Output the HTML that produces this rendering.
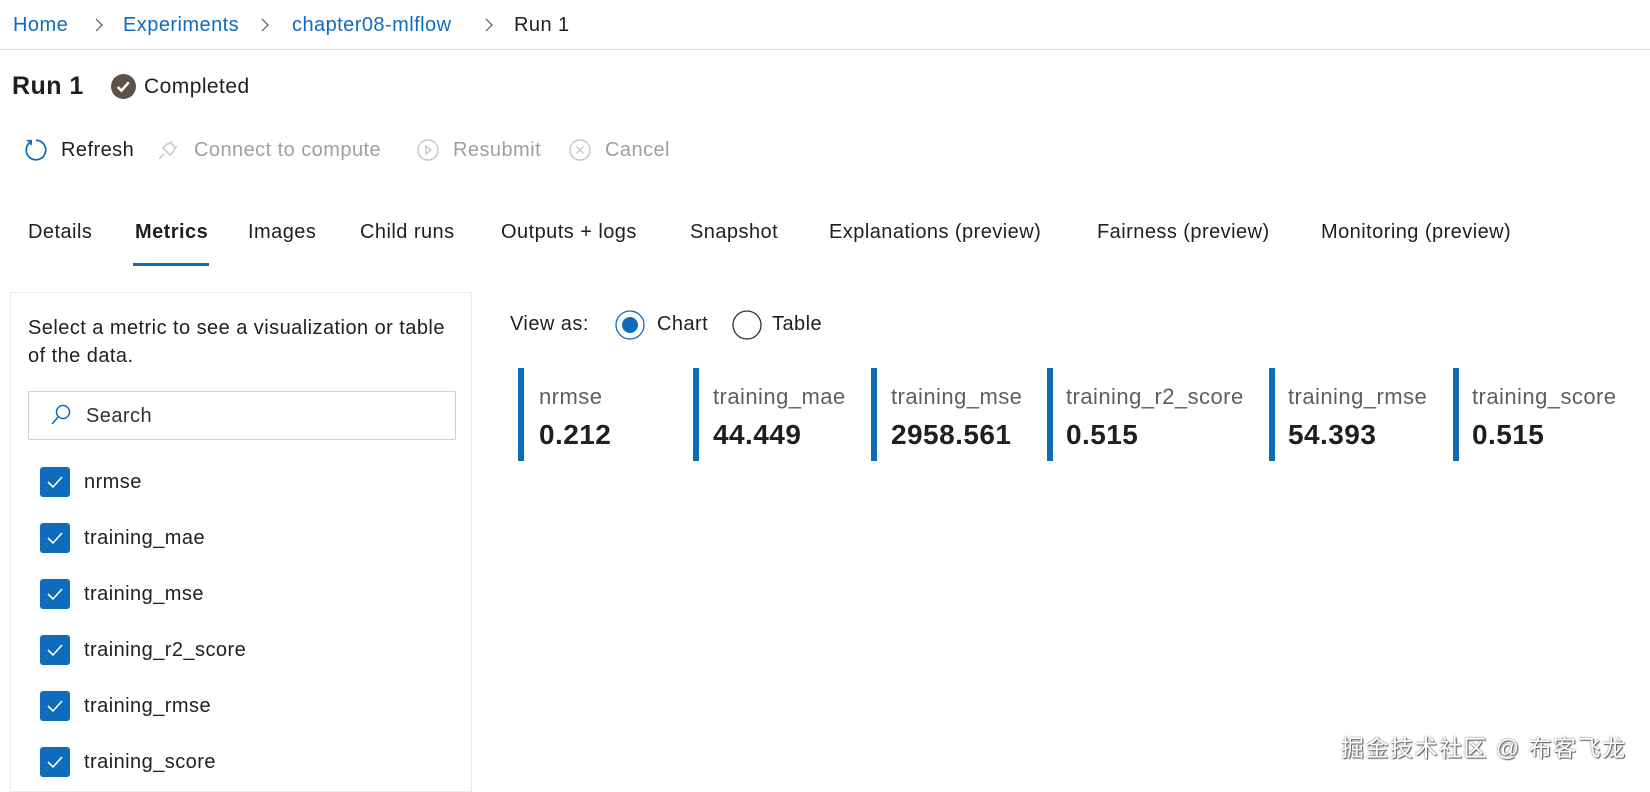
<!DOCTYPE html>
<html><head><meta charset="utf-8"><style>
*{margin:0;padding:0;box-sizing:border-box}
body{width:1650px;height:785px;overflow:hidden;background:#fff;font-family:"Liberation Sans","Noto Sans CJK SC",sans-serif;color:#201f1e;position:relative;letter-spacing:0.45px}
.a{position:absolute;white-space:nowrap;line-height:1}
.bc{font-size:20px;color:#0f6cbd;top:15px}
.chev{position:absolute;top:17px}
.tb{font-size:20px;top:140px;color:#a19f9d}
.tab{font-size:20px;top:222px;color:#201f1e}
.cb{position:absolute;left:40px;width:30px;height:30px;background:#0f6cbd;border-radius:3px}
.cb svg{position:absolute;left:6px;top:7px}
.lbl{font-size:20px;left:84px}
.bar{position:absolute;top:368px;height:93px;width:6px;background:#0f6cbd}
.ml{font-size:22px;color:#605e5c;top:386px}
.mv{font-size:28px;font-weight:bold;color:#201f1e;top:421px}
</style></head><body>
<div class="a bc" style="left:13px">Home</div>
<svg class="chev" style="left:94px" width="10" height="16" viewBox="0 0 10 16"><path d="M2 2l6 6-6 6" stroke="#555" stroke-width="1.2" fill="none"/></svg>
<div class="a bc" style="left:123px">Experiments</div>
<svg class="chev" style="left:260px" width="10" height="16" viewBox="0 0 10 16"><path d="M2 2l6 6-6 6" stroke="#555" stroke-width="1.2" fill="none"/></svg>
<div class="a bc" style="left:292px">chapter08-mlflow</div>
<svg class="chev" style="left:484px" width="10" height="16" viewBox="0 0 10 16"><path d="M2 2l6 6-6 6" stroke="#555" stroke-width="1.2" fill="none"/></svg>
<div class="a bc" style="left:514px;color:#201f1e">Run 1</div>
<div style="position:absolute;left:0;top:49px;width:1650px;height:1px;background:#e1dfdd"></div>

<div class="a" style="left:12px;top:74px;font-size:25px;font-weight:bold">Run 1</div>
<svg style="position:absolute;left:111px;top:74px" width="25" height="25" viewBox="0 0 24 24"><circle cx="12" cy="12" r="12" fill="#5c5248"/><path d="M6.5 12.5l3.5 3.5 7-8" stroke="#fff" stroke-width="2.4" fill="none"/></svg>
<div class="a" style="left:144px;top:76px;font-size:21px">Completed</div>

<svg style="position:absolute;left:23px;top:137px" width="26" height="26" viewBox="0 0 24 24"><path d="M7 4.5A9 9 0 1 0 12 3" stroke="#0f6cbd" stroke-width="1.6" fill="none"/><path d="M3.5 3.5h4v4" stroke="#0f6cbd" stroke-width="1.6" fill="none"/></svg>
<div class="a tb" style="left:61px;color:#201f1e">Refresh</div>
<svg style="position:absolute;left:156px;top:138px" width="24" height="24" viewBox="0 0 24 24"><path d="M3 21l5-5M16 3l-3 3M21 8l-3 3M7 10l7 7 3-3c2-2 2-5 0-7s-5-2-7 0z" stroke="#c8c6c4" stroke-width="1.4" fill="none"/></svg>
<div class="a tb" style="left:194px">Connect to compute</div>
<svg style="position:absolute;left:416px;top:138px" width="24" height="24" viewBox="0 0 24 24"><circle cx="12" cy="12" r="10" stroke="#c8c6c4" stroke-width="1.4" fill="none"/><path d="M10 8l5 4-5 4z" stroke="#c8c6c4" stroke-width="1.4" fill="none"/></svg>
<div class="a tb" style="left:453px">Resubmit</div>
<svg style="position:absolute;left:568px;top:138px" width="24" height="24" viewBox="0 0 24 24"><circle cx="12" cy="12" r="10" stroke="#c8c6c4" stroke-width="1.4" fill="none"/><path d="M8.5 8.5l7 7M15.5 8.5l-7 7" stroke="#c8c6c4" stroke-width="1.4"/></svg>
<div class="a tb" style="left:605px">Cancel</div>

<div class="a tab" style="left:28px">Details</div>
<div class="a tab" style="left:135px;font-weight:bold">Metrics</div>
<div style="position:absolute;left:133px;top:263px;width:76px;height:3px;background:#0f6cbd"></div>
<div class="a tab" style="left:248px">Images</div>
<div class="a tab" style="left:360px">Child runs</div>
<div class="a tab" style="left:501px">Outputs + logs</div>
<div class="a tab" style="left:690px">Snapshot</div>
<div class="a tab" style="left:829px">Explanations (preview)</div>
<div class="a tab" style="left:1097px">Fairness (preview)</div>
<div class="a tab" style="left:1321px">Monitoring (preview)</div>

<div style="position:absolute;left:10px;top:292px;width:462px;height:500px;border:1px solid #edebe9"></div>
<div class="a" style="left:28px;top:314px;font-size:20px;line-height:28px">Select a metric to see a visualization or table<br>of the data.</div>
<div style="position:absolute;left:28px;top:391px;width:428px;height:49px;border:1px solid #d2d0ce;border-radius:2px"></div>
<svg style="position:absolute;left:49px;top:403px" width="24" height="24" viewBox="0 0 24 24"><circle cx="14" cy="9" r="6.5" stroke="#0f6cbd" stroke-width="1.5" fill="none"/><path d="M9.5 13.5L3 21" stroke="#0f6cbd" stroke-width="1.5"/></svg>
<div class="a" style="left:86px;top:406px;font-size:20px;color:#323130">Search</div>

<div class="cb" style="top:467px"><svg width="18" height="16" viewBox="0 0 18 16"><path d="M2 8l5 5L16 3" stroke="#fff" stroke-width="1.6" fill="none"/></svg></div><div class="a lbl" style="top:472px">nrmse</div>
<div class="cb" style="top:523px"><svg width="18" height="16" viewBox="0 0 18 16"><path d="M2 8l5 5L16 3" stroke="#fff" stroke-width="1.6" fill="none"/></svg></div><div class="a lbl" style="top:528px">training_mae</div>
<div class="cb" style="top:579px"><svg width="18" height="16" viewBox="0 0 18 16"><path d="M2 8l5 5L16 3" stroke="#fff" stroke-width="1.6" fill="none"/></svg></div><div class="a lbl" style="top:584px">training_mse</div>
<div class="cb" style="top:635px"><svg width="18" height="16" viewBox="0 0 18 16"><path d="M2 8l5 5L16 3" stroke="#fff" stroke-width="1.6" fill="none"/></svg></div><div class="a lbl" style="top:640px">training_r2_score</div>
<div class="cb" style="top:691px"><svg width="18" height="16" viewBox="0 0 18 16"><path d="M2 8l5 5L16 3" stroke="#fff" stroke-width="1.6" fill="none"/></svg></div><div class="a lbl" style="top:696px">training_rmse</div>
<div class="cb" style="top:747px"><svg width="18" height="16" viewBox="0 0 18 16"><path d="M2 8l5 5L16 3" stroke="#fff" stroke-width="1.6" fill="none"/></svg></div><div class="a lbl" style="top:752px">training_score</div>

<div class="a" style="left:510px;top:314px;font-size:20px">View as:</div>
<svg style="position:absolute;left:615px;top:310px" width="30" height="30" viewBox="0 0 30 30"><circle cx="15" cy="15" r="14" stroke="#0f6cbd" stroke-width="1.3" fill="none"/><circle cx="15" cy="15" r="8" fill="#0f6cbd"/></svg>
<div class="a" style="left:657px;top:314px;font-size:20px">Chart</div>
<svg style="position:absolute;left:732px;top:310px" width="30" height="30" viewBox="0 0 30 30"><circle cx="15" cy="15" r="14" stroke="#323130" stroke-width="1.3" fill="none"/></svg>
<div class="a" style="left:772px;top:314px;font-size:20px">Table</div>

<div class="bar" style="left:518px"></div><div class="a ml" style="left:539px">nrmse</div><div class="a mv" style="left:539px">0.212</div>
<div class="bar" style="left:693px"></div><div class="a ml" style="left:713px">training_mae</div><div class="a mv" style="left:713px">44.449</div>
<div class="bar" style="left:871px"></div><div class="a ml" style="left:891px">training_mse</div><div class="a mv" style="left:891px">2958.561</div>
<div class="bar" style="left:1047px"></div><div class="a ml" style="left:1066px">training_r2_score</div><div class="a mv" style="left:1066px">0.515</div>
<div class="bar" style="left:1269px"></div><div class="a ml" style="left:1288px">training_rmse</div><div class="a mv" style="left:1288px">54.393</div>
<div class="bar" style="left:1453px"></div><div class="a ml" style="left:1472px">training_score</div><div class="a mv" style="left:1472px">0.515</div>

<div class="a" style="left:1341px;top:737px;font-size:23px;letter-spacing:1.5px;color:#fff;text-shadow:0 0 2px #666,1px 1px 1px #555">掘金技术社区 @ 布客飞龙</div>
</body></html>
